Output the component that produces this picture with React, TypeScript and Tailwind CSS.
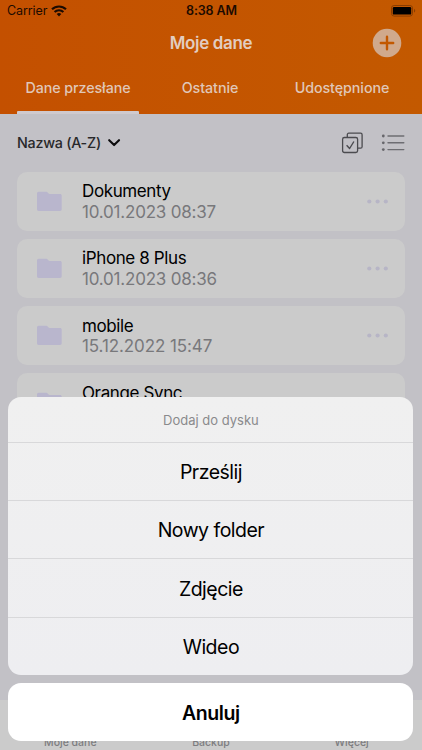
import type { ReactNode } from "react";

interface Folder {
  name: string;
  date?: string;
  dateClass?: string;
}

const folders: Folder[] = [
  { name: "Dokumenty", date: "10.01.2023 08:37", dateClass: "tracking-[-0.2px]" },
  { name: "iPhone 8 Plus", date: "10.01.2023 08:36", dateClass: "tracking-[-0.2px]" },
  { name: "mobile", date: "15.12.2022 15:47", dateClass: "tracking-[-0.1px]" },
  { name: "Orange Sync" },
];

const actions = ["Prześlij", "Nowy folder", "Zdjęcie", "Wideo"];

function WifiIcon() {
  return (
    <svg width="16" height="12" viewBox="0 0 16 12" fill="none" stroke="#1c0b00" strokeWidth="2.1">
      <path d="M1 4.3a10 10 0 0 1 14 0" />
      <path d="M3.6 7.1a6.2 6.2 0 0 1 8.8 0" />
      <path d="M8 11.4 5.7 9a3.3 3.3 0 0 1 4.6 0Z" fill="#1c0b00" stroke="none" />
    </svg>
  );
}

function BatteryIcon() {
  return (
    <svg width="25" height="12" viewBox="0 0 25 12">
      <rect x="0.5" y="0.5" width="21" height="10.6" rx="2.6" fill="none" stroke="#8a3d00" />
      <rect x="1.8" y="2" width="18.4" height="7.6" rx="1.2" fill="#000" />
      <path d="M23 4v3.6c.8-.3 1.2-1 1.2-1.8S23.8 4.3 23 4Z" fill="#8a3d00" />
    </svg>
  );
}

function FolderIcon() {
  return (
    <svg width="25" height="21" viewBox="0 0 25 21" fill="#b9b6cd">
      <path d="M1.7.8h7.6c.6 0 1 .2 1.3.6l1 1.2c.2.3.5.4.9.4H23c1 0 1.7.7 1.7 1.700v13.600c0 1-.7 1.700-1.700 1.700H1.700C.7 20 0 19.300 0 18.300V2.500C0 1.500.7.8 1.700.8Z" />
    </svg>
  );
}

function MoreIcon() {
  return (
    <svg width="21" height="5" viewBox="0 0 21 5" fill="#b7b5c6">
      <circle cx="2.3" cy="2.5" r="2.1" />
      <circle cx="10.6" cy="2.5" r="2.1" />
      <circle cx="18.8" cy="2.5" r="2.1" />
    </svg>
  );
}

function StatusBar() {
  return (
    <div className="grid h-[22px] grid-cols-3 items-center pl-[7px] pr-[6px] text-[12.5px] text-[#1c0b00]">
      <div className="flex items-center gap-[4px]">
        <span className="pt-px tracking-[-0.1px]">Carrier</span>
        <WifiIcon />
      </div>
      <span className="pt-px text-center font-semibold tracking-[-0.1px]">8:38 AM</span>
      <div className="flex justify-end">
        <BatteryIcon />
      </div>
    </div>
  );
}

function Tab({ children, active }: { children: ReactNode; active?: boolean }) {
  return (
    <div className="flex flex-col items-center justify-between">
      <span className="pt-[14px] text-[14.3px] font-medium leading-5 tracking-[-0.08px]">{children}</span>
      {active && <div className="h-[3px] w-[122px] rounded-t-[1px] bg-[#cfcace]" />}
    </div>
  );
}

function Header() {
  return (
    <header className="flex h-[114px] shrink-0 flex-col bg-linear-to-r from-[#c45000] to-[#c35900]">
      <StatusBar />
      <div className="grid h-[42px] grid-cols-[1fr_auto_1fr] items-center text-[#e2cdc0]">
        <span />
        <h1 className="pt-[2px] text-[17px] font-semibold tracking-[-0.35px]">Moje dane</h1>
        <div className="flex justify-end pr-5">
          <svg width="30" height="30" viewBox="0 0 30 30">
            <circle cx="15" cy="15" r="14.3" fill="#d0a98c" />
            <path d="M15 8.8v12.4M8.8 15h12.4" stroke="#c25800" strokeWidth="2.4" strokeLinecap="round" />
          </svg>
        </div>
      </div>
      <div className="grid flex-1 grid-cols-[132px_132px_132px] justify-center pr-[2px] text-[#e0c7b8]">
        <Tab active>Dane przesłane</Tab>
        <Tab>Ostatnie</Tab>
        <Tab>Udostępnione</Tab>
      </div>
    </header>
  );
}

function Toolbar() {
  return (
    <div className="flex h-[57px] shrink-0 items-center justify-between px-[17px]">
      <div className="flex items-center gap-[7px] text-[#28282a]">
        <span className="pt-px text-[14.3px] font-medium tracking-[-0.25px]">Nazwa (A-Z)</span>
        <svg width="13" height="9" viewBox="0 0 13 9" fill="none" stroke="#0c0c0d" strokeWidth="2.1" strokeLinecap="round" strokeLinejoin="round">
          <path d="m1.2 2.200 4.900 4.900L11 2.200" />
        </svg>
      </div>
      <div className="flex items-center gap-[18px]">
        <svg width="22" height="22" viewBox="0 0 22 22" fill="none" stroke="#4b4b4f" strokeWidth="1.3" strokeLinejoin="round">
          <rect x="1.600" y="5.500" width="15" height="15" rx="1.800" />
          <path d="M6.300 5.500V2.700c0-.9.600-1.500 1.500-1.500h11.800c.9 0 1.500.6 1.500 1.500v12c0 .9-.6 1.500-1.500 1.500h-3" />
          <path d="m5.600 13.200 3 3.300 4.300-7" strokeWidth="1.400" />
        </svg>
        <svg width="24" height="18" viewBox="0 0 24 18" fill="#66666b">
          <circle cx="2.300" cy="2" r="1.400" />
          <circle cx="2.300" cy="8.800" r="1.400" />
          <circle cx="2.300" cy="15.600" r="1.400" />
          <path d="M7 2h15.800M7 8.800h15.800M7 15.600h15.800" stroke="#6d6d72" strokeWidth="1.400" strokeLinecap="round" />
        </svg>
      </div>
    </div>
  );
}

function FolderCard({ folder }: { folder: Folder }) {
  return (
    <div className="flex h-[59px] shrink-0 items-start rounded-[10px] bg-[#cbcbcb] pl-5 pr-[17.5px]">
      <div className="pt-[19px]">
        <FolderIcon />
      </div>
      <div className="ml-5 flex flex-1 flex-col pt-[9.7px]">
        <span className="text-[17px] leading-[20.5px] tracking-[-0.38px] text-black">{folder.name}</span>
        {folder.date && (
          <span className={`text-[17px] leading-[20.5px] text-[#78787b] ${folder.dateClass}`}>{folder.date}</span>
        )}
      </div>
      <div className="pt-[27px]">
        <MoreIcon />
      </div>
    </div>
  );
}

function ActionSheet() {
  return (
    <div className="absolute left-[8.4px] right-[8.6px] top-[397.2px] flex flex-col gap-2 text-center text-black">
      <div className="overflow-hidden rounded-[13px] bg-linear-to-b from-[#f0f0f0] to-[#eeeef1]">
        <div className="flex h-[44.5px] items-center justify-center pt-[2px] text-[13px] text-[#8a8a8c]">Dodaj do dysku</div>
        {actions.map((action) => (
          <div key={action} className="flex h-[58.4px] items-center justify-center border-t border-[#d8d8da] pt-[2px] text-[19.5px] tracking-[-0.52px]">
            {action}
          </div>
        ))}
      </div>
      <div className="flex h-[58px] items-center justify-center rounded-[13px] bg-white pt-[3px] text-[19.5px] font-semibold tracking-[-0.4px]">
        Anuluj
      </div>
    </div>
  );
}

export default function App() {
  return (
    <div className="relative flex h-[750px] w-[422px] flex-col overflow-hidden bg-[#c2c1c6] font-['Inter','Liberation_Sans',sans-serif]">
      <Header />
      <Toolbar />
      <main className="flex min-h-0 flex-1 flex-col gap-[8.3px] overflow-hidden px-[17px] pt-[0.5px]">
        {folders.map((folder) => (
          <FolderCard key={folder.name} folder={folder} />
        ))}
      </main>
      <nav className="grid h-[50px] shrink-0 grid-cols-3 items-end bg-[#cbcbcb] text-center text-[10.5px] font-medium leading-[14px] text-[#7d7d80]">
        <span>Moje dane</span>
        <span>Backup</span>
        <span>Więcej</span>
      </nav>
      <ActionSheet />
    </div>
  );
}
